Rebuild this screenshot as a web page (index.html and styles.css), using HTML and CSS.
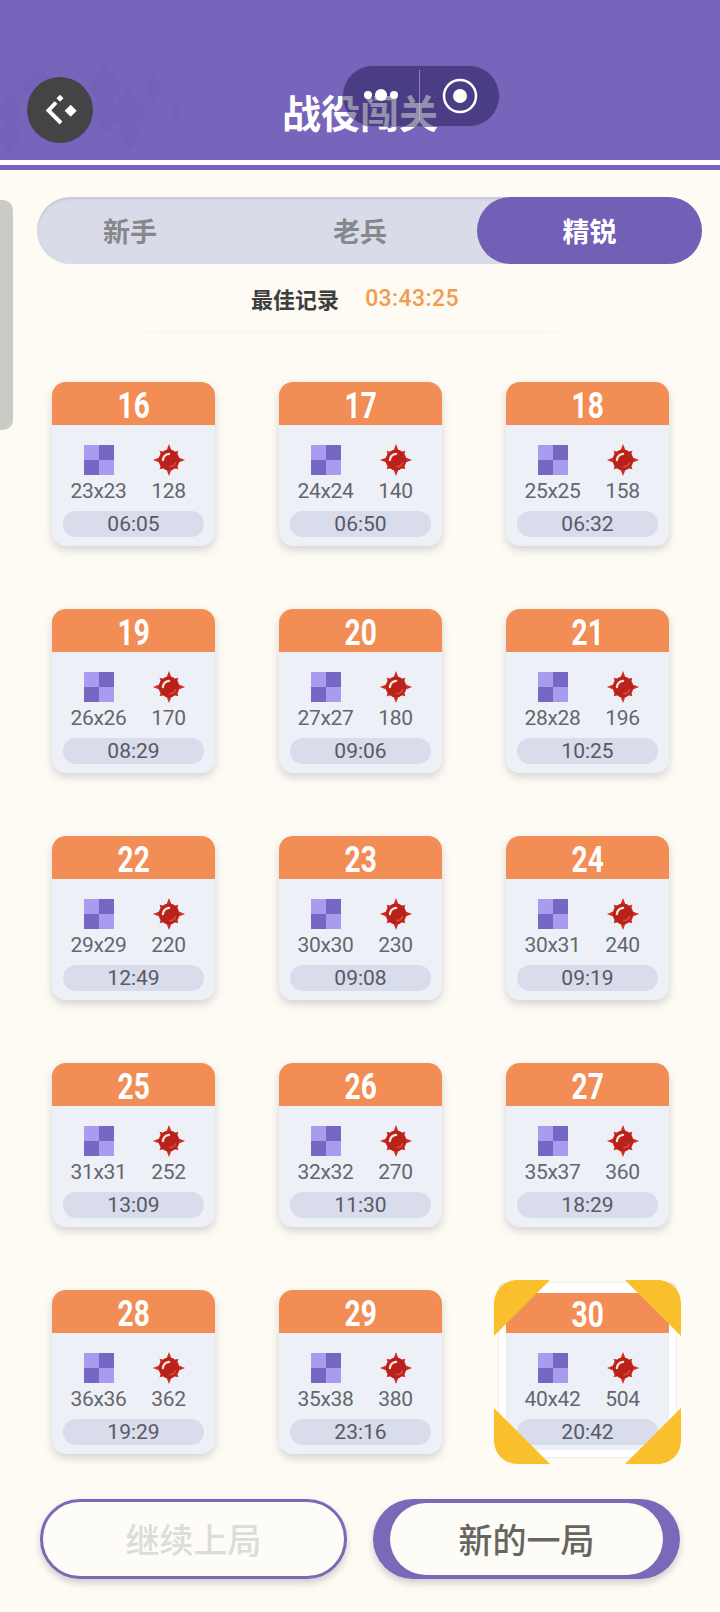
FILE: index.html
```html
<!DOCTYPE html>
<html lang="zh">
<head>
<meta charset="utf-8">
<title>战役闯关</title>
<link rel="stylesheet" href="styles.css">
</head>
<body>
<svg class="defs" width="0" height="0" aria-hidden="true">
  <symbol id="board" viewBox="0 0 30 30">
    <rect width="15" height="15" fill="#a99bee"/><rect x="15" width="15" height="15" fill="#7767c4"/>
    <rect y="15" width="15" height="15" fill="#7767c4"/><rect x="15" y="15" width="15" height="15" fill="#a99bee"/>
  </symbol>
  <symbol id="mine" viewBox="0 0 36 36">
    <path d="M18 1L21.400 9.700L27.900 8.100L26.300 14.600L35 18L26.300 21.400L27.900 27.900L21.400 26.300L18 35L14.600 26.300L8.100 27.900L9.700 21.400L1 18L9.700 14.600L8.100 8.100L14.600 9.700z" fill="#d52c20"/>
    <circle cx="18" cy="18" r="11" fill="#b9221b"/>
    <path d="M11.500 18c.4-3.600 3-6 6.600-6.500" fill="none" stroke="#fbe6da" stroke-width="2.400" stroke-linecap="round"/>
    <path d="M19 25c2.800 0 4.800-1.500 5.800-4" fill="none" stroke="#d9483a" stroke-width="1.800" stroke-linecap="round"/>
  </symbol>
</svg>

<header class="topbar">
  <svg class="diamonds" viewBox="0 0 200 100" aria-hidden="true">
    <path d="M105 5l17 22-17 22-17-22zM128 29l18 23-18 23-18-23zM106 31l15 21-15 21-15-21zM153 14l8 14-8 14-8-14zM176 43l6 9-6 9-6-9zM10 30l12 22-12 22-12-22zM10 56l12 19-12 19-12-19zM130 60l10 15-10 15-10-15zM40 7l20 20-20 20-20-20z" fill="#6a56aa" opacity=".25"/>
  </svg>
  <button class="back" type="button" aria-label="返回">
    <svg viewBox="0 0 32 32" width="32" height="32" aria-hidden="true">
      <path d="M12 8.500L4.500 16.500L17 29" fill="none" stroke="#fff" stroke-width="4"/>
      <path d="M26.700 10.700l6 6-6 6-6-6z" fill="#fff"/><path d="M16 .8l3.500 3.500-3.500 3.500-3.500-3.500z" fill="#fff"/>
    </svg>
  </button>
  <h1 class="title">战役闯关</h1>
  <div class="capsule">
    <span class="dots"><i></i><i class="big"></i><i></i></span>
    <span class="divider"></span>
    <svg class="target" viewBox="0 0 36 36" width="36" height="36" aria-hidden="true">
      <circle cx="18" cy="18" r="16" fill="none" stroke="#fff" stroke-width="2.500"/><circle cx="18" cy="18" r="7" fill="#fff"/>
    </svg>
  </div>
</header>
<div class="band"></div>

<div class="sidetab"></div>

<main class="content">
  <nav class="tabs">
    <span class="tab">新手</span>
    <span class="tab">老兵</span>
    <span class="tab active">精锐</span>
  </nav>
  <p class="record"><span class="record-label">最佳记录</span><span class="record-time">03:43:25</span></p>
  <div class="rule"></div>

  <section class="levels">
    <article class="card"><h2><span>16</span></h2><div class="stats"><div class="stat"><svg class="board"><use href="#board"/></svg><span>23x23</span></div><div class="stat"><svg class="mine"><use href="#mine"/></svg><span>128</span></div></div><div class="time">06:05</div></article>
    <article class="card"><h2><span>17</span></h2><div class="stats"><div class="stat"><svg class="board"><use href="#board"/></svg><span>24x24</span></div><div class="stat"><svg class="mine"><use href="#mine"/></svg><span>140</span></div></div><div class="time">06:50</div></article>
    <article class="card"><h2><span>18</span></h2><div class="stats"><div class="stat"><svg class="board"><use href="#board"/></svg><span>25x25</span></div><div class="stat"><svg class="mine"><use href="#mine"/></svg><span>158</span></div></div><div class="time">06:32</div></article>
    <article class="card"><h2><span>19</span></h2><div class="stats"><div class="stat"><svg class="board"><use href="#board"/></svg><span>26x26</span></div><div class="stat"><svg class="mine"><use href="#mine"/></svg><span>170</span></div></div><div class="time">08:29</div></article>
    <article class="card"><h2><span>20</span></h2><div class="stats"><div class="stat"><svg class="board"><use href="#board"/></svg><span>27x27</span></div><div class="stat"><svg class="mine"><use href="#mine"/></svg><span>180</span></div></div><div class="time">09:06</div></article>
    <article class="card"><h2><span>21</span></h2><div class="stats"><div class="stat"><svg class="board"><use href="#board"/></svg><span>28x28</span></div><div class="stat"><svg class="mine"><use href="#mine"/></svg><span>196</span></div></div><div class="time">10:25</div></article>
    <article class="card"><h2><span>22</span></h2><div class="stats"><div class="stat"><svg class="board"><use href="#board"/></svg><span>29x29</span></div><div class="stat"><svg class="mine"><use href="#mine"/></svg><span>220</span></div></div><div class="time">12:49</div></article>
    <article class="card"><h2><span>23</span></h2><div class="stats"><div class="stat"><svg class="board"><use href="#board"/></svg><span>30x30</span></div><div class="stat"><svg class="mine"><use href="#mine"/></svg><span>230</span></div></div><div class="time">09:08</div></article>
    <article class="card"><h2><span>24</span></h2><div class="stats"><div class="stat"><svg class="board"><use href="#board"/></svg><span>30x31</span></div><div class="stat"><svg class="mine"><use href="#mine"/></svg><span>240</span></div></div><div class="time">09:19</div></article>
    <article class="card"><h2><span>25</span></h2><div class="stats"><div class="stat"><svg class="board"><use href="#board"/></svg><span>31x31</span></div><div class="stat"><svg class="mine"><use href="#mine"/></svg><span>252</span></div></div><div class="time">13:09</div></article>
    <article class="card"><h2><span>26</span></h2><div class="stats"><div class="stat"><svg class="board"><use href="#board"/></svg><span>32x32</span></div><div class="stat"><svg class="mine"><use href="#mine"/></svg><span>270</span></div></div><div class="time">11:30</div></article>
    <article class="card"><h2><span>27</span></h2><div class="stats"><div class="stat"><svg class="board"><use href="#board"/></svg><span>35x37</span></div><div class="stat"><svg class="mine"><use href="#mine"/></svg><span>360</span></div></div><div class="time">18:29</div></article>
    <article class="card"><h2><span>28</span></h2><div class="stats"><div class="stat"><svg class="board"><use href="#board"/></svg><span>36x36</span></div><div class="stat"><svg class="mine"><use href="#mine"/></svg><span>362</span></div></div><div class="time">19:29</div></article>
    <article class="card"><h2><span>29</span></h2><div class="stats"><div class="stat"><svg class="board"><use href="#board"/></svg><span>35x38</span></div><div class="stat"><svg class="mine"><use href="#mine"/></svg><span>380</span></div></div><div class="time">23:16</div></article>
    <article class="card selected"><h2><span>30</span></h2><div class="stats"><div class="stat"><svg class="board"><use href="#board"/></svg><span>40x42</span></div><div class="stat"><svg class="mine"><use href="#mine"/></svg><span>504</span></div></div><div class="time">20:42</div>
      <svg class="frame" viewBox="0 0 187 184" aria-hidden="true">
        <path d="M0 56V24C0 10 10 0 24 0h32z" fill="#f9bf2d"/>
        <path d="M187 56V24c0-14-10-24-24-24h-32z" fill="#f9bf2d"/>
        <path d="M0 128v32c0 14 10 24 24 24h32z" fill="#f9bf2d"/>
        <path d="M187 128v32c0 14-10 24-24 24h-32z" fill="#f9bf2d"/>
      </svg>
    </article>
  </section>

  <div class="actions">
    <button class="btn btn-continue" type="button">继续上局</button>
    <button class="btn btn-new" type="button"><span class="btn-inner">新的一局</span></button>
  </div>
</main>
</body>
</html>
```
FILE: styles.css
```css
* { box-sizing: border-box; }
html, body { margin: 0; padding: 0; }
body {
  width: 720px;
  height: 1612px;
  overflow: hidden;
  position: relative;
  background: #fdfbf3;
  font-family: "Roboto", "Noto Sans CJK SC", sans-serif;
}
.defs { position: absolute; }

.topbar {
  position: relative;
  height: 160px;
  background: #7864bb;
}
.diamonds {
  position: absolute;
  left: 0;
  top: 60px;
  width: 200px;
  height: 100px;
}
.back {
  position: absolute;
  left: 27px;
  top: 77px;
  width: 66px;
  height: 66px;
  padding: 0;
  border: 0;
  border-radius: 50%;
  background: #444345;
  display: flex;
  align-items: center;
  justify-content: center;
}
.back svg { overflow: visible; }
.title {
  margin: 0;
  padding-top: 88px;
  text-align: center;
  color: #fff;
  font: 700 39px/46px "Noto Sans CJK SC", sans-serif;
}
.capsule {
  position: absolute;
  left: 342px;
  top: 65px;
  width: 158px;
  height: 62px;
  border-radius: 31px;
  background: rgba(20, 10, 70, .45);
  border: 1px solid rgba(150, 135, 205, .5);
  display: flex;
  align-items: center;
}
.dots {
  width: 76px;
  display: flex;
  align-items: center;
  justify-content: center;
  gap: 3px;
  margin-top: -2px;
}
.dots i { width: 8px; height: 8px; border-radius: 50%; background: #fff; }
.dots i.big { width: 12px; height: 12px; }
.divider { width: 1px; height: 50px; background: rgba(200, 190, 230, .55); margin-top: -3px; }
.target { margin: 0 0 0 22px; }

.band {
  height: 10px;
  background: linear-gradient(#fff 0 5px, #7864bb 5px 10px);
}
.sidetab {
  position: absolute;
  left: 0;
  top: 200px;
  width: 13px;
  height: 230px;
  background: #cbcbc5;
  border-radius: 0 10px 10px 0;
}

.content { padding: 27px 18px 0 37px; }
.tabs {
  height: 67px;
  border-radius: 34px;
  background: #d9dce8;
  box-shadow: inset 0 2px 3px rgba(120, 125, 150, .22);
  display: grid;
  grid-template-columns: 186px 274px 205px;
  align-items: stretch;
}
.tab {
  display: flex;
  align-items: center;
  justify-content: center;
  color: #86888c;
  font: 700 27px/1 "Noto Sans CJK SC", sans-serif;
}
.tab.active {
  margin-left: -20px;
  border-radius: 34px;
  background: #725fb6;
  color: #fff;
}
.record {
  margin: 20px 0 0;
  height: 28px;
  padding-right: 29px;
  display: flex;
  justify-content: center;
  align-items: center;
  gap: 26px;
}
.record-label { color: #3e3e3e; font: 700 22px/28px "Noto Sans CJK SC", sans-serif; }
.record-time { color: #f39b4f; font: 500 23px/30px "Roboto", sans-serif; letter-spacing: .4px; padding-top: 2px; }
.rule {
  height: 1px;
  margin: 19px 60px 0 30px;
  background: linear-gradient(90deg, transparent, #f6f3ea 20%, #f6f3ea 80%, transparent);
}

.levels {
  margin: 50px 0 0 15px;
  width: 616px;
  display: grid;
  grid-template-columns: repeat(3, 163px);
  grid-auto-rows: 164px;
  column-gap: 64px;
  row-gap: 63px;
}
.card {
  position: relative;
  border-radius: 14px;
  background: #eef0f7;
  box-shadow: 0 4px 8px rgba(110, 110, 125, .28);
  display: flex;
  flex-direction: column;
}
.card h2 {
  margin: 0;
  height: 43px;
  border-radius: 14px 14px 0 0;
  background: #f18d55;
  color: #fff;
  text-align: center;
  font: 700 36px/48px "Roboto", sans-serif;
}
.card h2 span {
  display: inline-block;
  transform: scaleX(.78);
}
.stats {
  display: flex;
  justify-content: center;
  gap: 12px;
  margin-top: 20px;
}
.stat {
  width: 58px;
  display: flex;
  flex-direction: column;
  align-items: center;
  color: #64666c;
  font: 400 21px/26px "Roboto", sans-serif;
  letter-spacing: -.3px;
  white-space: nowrap;
}
.stat svg { display: block; }
.board { width: 30px; height: 30px; margin-bottom: 3px; }
.mine { width: 34px; height: 34px; margin-top: -2px; margin-bottom: 1px; }
.time {
  margin: 7px 11px 0;
  height: 26px;
  border-radius: 13px;
  background: #d9dcea;
  color: #575965;
  text-align: center;
  font: 400 21px/26px "Roboto", sans-serif;
}
.selected {
  height: 160px;
  outline: 7px solid #fff;
  border-radius: 2px;
  box-shadow: 0 0 0 8px #eceee8;
}
.selected h2 { border-radius: 0; border-top: 3px solid #fff; line-height: 44px; }
.frame {
  position: absolute;
  left: -12px;
  top: -10px;
  width: 187px;
  height: 184px;
  pointer-events: none;
}

.actions {
  position: absolute;
  left: 40px;
  top: 1499px;
  width: 640px;
  display: flex;
  justify-content: space-between;
}
.btn {
  width: 307px;
  height: 80px;
  border-radius: 40px;
  box-shadow: 0 4px 7px rgba(100, 100, 110, .3);
  font: 500 34px/1 "Noto Sans CJK SC", sans-serif;
}
.btn-continue {
  border: 3px solid #7a68b8;
  background: #fdfcf6;
  color: #dcdcd8;
}
.btn-new {
  border: 0;
  padding: 4px 17px;
  background: #7a68b8;
  color: #66665f;
  display: flex;
}
.btn-inner {
  flex: 1;
  border-radius: 36px;
  background: #fdfcf6;
  display: flex;
  align-items: center;
  justify-content: center;
}
```
